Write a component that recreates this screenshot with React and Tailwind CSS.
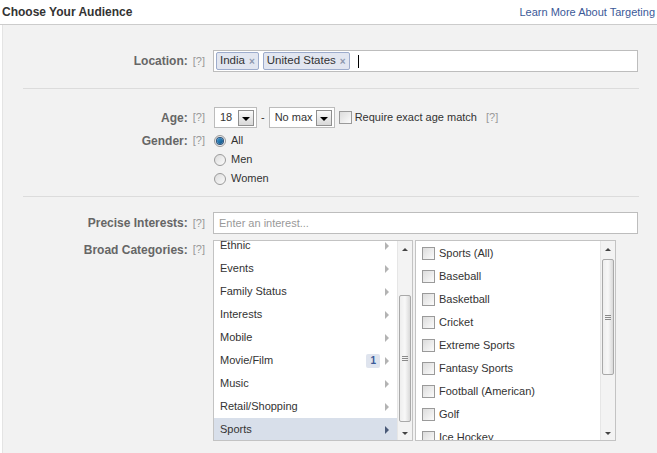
import { useState } from 'react';

const font = { fontFamily: '"Liberation Sans", Arial, sans-serif' };

const categories = [
  { label: 'Ethnic' },
  { label: 'Events' },
  { label: 'Family Status' },
  { label: 'Interests' },
  { label: 'Mobile' },
  { label: 'Movie/Film', count: 1 },
  { label: 'Music' },
  { label: 'Retail/Shopping' },
  { label: 'Sports', active: true },
];

const sports = [
  'Sports (All)',
  'Baseball',
  'Basketball',
  'Cricket',
  'Extreme Sports',
  'Fantasy Sports',
  'Football (American)',
  'Golf',
  'Ice Hockey',
];

function Help({ className = 'ml-[5px]' }) {
  return <span className={`${className} text-[11px] text-[#999]`}>[?]</span>;
}

function Label({ children, className = '' }) {
  return (
    <div className={`w-[203px] flex justify-end items-center shrink-0 pr-[1px] ${className}`}>
      <span className="font-bold text-[#666] text-[12px]">{children}</span>
      <Help />
    </div>
  );
}

function Token({ children }) {
  return (
    <span className="inline-flex items-center h-[18px] px-[3px] mr-[4px] bg-[#e2e6f0] border border-[#9daccc] rounded-[2px] text-[#333] text-[11.5px]">
      {children}
      <span className="ml-[4px] text-[#8d97ad] text-[10px] font-bold">×</span>
    </span>
  );
}

function Select({ value, width }) {
  return (
    <div className={`h-[21px] ${width} bg-white border border-[#bcbcbc] flex items-center justify-between pl-[5px] pr-[2px] text-[11px] text-[#333]`}>
      <span>{value}</span>
      <span className="w-[16px] h-[16px] border border-[#8f8f8f] bg-gradient-to-b from-[#fafafa] to-[#d8d8d8] flex items-center justify-center">
        <span className="mt-[2px] border-x-[4px] border-x-transparent border-t-[4px] border-t-black" />
      </span>
    </div>
  );
}

function Checkbox() {
  return (
    <span className="block w-[13px] h-[13px] shrink-0 border border-[#9a9a9a] bg-gradient-to-br from-[#dcdcdc] to-[#fbfbfb]" />
  );
}

function Radio({ checked }) {
  return (
    <span className="w-[12px] h-[12px] rounded-full border border-[#9a9a9a] bg-gradient-to-br from-[#dcdcdc] to-[#fbfbfb] flex items-center justify-center shrink-0">
      {checked && <span className="w-[6px] h-[6px] rounded-full bg-gradient-to-br from-[#3d9ad6] to-[#0e4f80] ring-1 ring-[#2b4f78]" />}
    </span>
  );
}

function Scrollbar({ offset, thumb }) {
  return (
    <div className="w-[15px] shrink-0 bg-[#f3f3f3] border-l border-[#e6e6e6] flex flex-col">
      <div className="h-[16px] flex items-center justify-center">
        <span className="border-x-[3px] border-x-transparent border-b-[3px] border-b-[#444]" />
      </div>
      <div style={{ height: offset }} />
      <div
        className="mx-[1px] rounded-[2px] border border-[#a9a9a9] bg-gradient-to-r from-[#eeeeee] via-[#f8f8f8] to-[#d9d9d9] flex items-center justify-center"
        style={{ height: thumb }}
      >
        <span className="flex flex-col gap-[1px]">
          <span className="block w-[6px] h-px bg-[#8a8a8a]" />
          <span className="block w-[6px] h-px bg-[#8a8a8a]" />
          <span className="block w-[6px] h-px bg-[#8a8a8a]" />
        </span>
      </div>
      <div className="flex-1" />
      <div className="h-[14px] flex items-center justify-center">
        <span className="border-x-[3px] border-x-transparent border-t-[3px] border-t-[#444]" />
      </div>
    </div>
  );
}

export default function App() {
  const [gender, setGender] = useState('All');

  return (
    <div className="w-[657px] h-[453px] bg-white overflow-hidden text-[#333]" style={font}>
      <div className="h-[25px] flex items-center justify-between pl-[2px] pr-[2px] border-b border-[#cccccc]">
        <span className="font-bold text-[12px] text-[#333]">Choose Your Audience</span>
        <span className="text-[11px] text-[#3b5998]">Learn More About Targeting</span>
      </div>

      <div className="ml-[2px] h-[428px] bg-[#f2f2f2] border-l border-[#e4e4e4] pt-[25px]">
        <div className="flex items-center">
          <Label>Location:</Label>
          <div className="ml-[7px] w-[425px] h-[22px] bg-white border border-[#bdbdbd] flex items-center pl-[2px]">
            <Token>India</Token>
            <Token>United States</Token>
            <span className="ml-[4px] w-px h-[13px] bg-black" />
          </div>
        </div>

        <div className="mt-[16px] ml-[20px] mr-[18px] border-t border-[#dcdcdc]" />

        <div className="mt-[18px] flex items-center">
          <Label>Age:</Label>
          <div className="ml-[8px] flex items-center">
            <Select value="18" width="w-[43px]" />
            <span className="mx-[4px] text-[11px]">-</span>
            <Select value="No max" width="w-[66px]" />
            <span className="ml-[4px] flex"><Checkbox /></span>
            <span className="ml-[3px] text-[11px]">Require exact age match</span>
            <Help className="ml-[9px]" />
          </div>
        </div>

        <div className="mt-[3px] flex items-start">
          <Label className="h-[19px]">Gender:</Label>
          <div className="ml-[8px] flex flex-col">
            {['All', 'Men', 'Women'].map((g) => (
              <label key={g} className="h-[19px] flex items-center cursor-pointer" onClick={() => setGender(g)}>
                <Radio checked={gender === g} />
                <span className="ml-[5px] text-[11px]">{g}</span>
              </label>
            ))}
          </div>
        </div>

        <div className="mt-[8px] ml-[20px] mr-[18px] border-t border-[#dcdcdc]" />

        <div className="mt-[15px] flex items-center">
          <Label>Precise Interests:</Label>
          <div className="ml-[7px] w-[425px] h-[22px] bg-white border border-[#bdbdbd] flex items-center pl-[5px] text-[11px] text-[#999]">
            Enter an interest...
          </div>
        </div>

        <div className="mt-[6px] flex items-start">
          <Label className="h-[19px]">Broad Categories:</Label>
          <div className="ml-[7px] flex gap-[2px]">
            <div className="w-[200px] h-[201px] bg-white border border-[#c3c3c3] flex overflow-hidden">
              <div className="flex-1 overflow-hidden">
                <div className="-mt-[7px]">
                  {categories.map((c) => (
                    <div
                      key={c.label}
                      className={`h-[23px] flex items-center pl-[6px] pr-[8px] text-[11px] ${c.active ? 'bg-[#d8dfea]' : ''}`}
                    >
                      <span className="flex-1">{c.label}</span>
                      {c.count && (
                        <span className="mr-[5px] px-[4px] h-[14px] rounded-[2px] bg-[#dfe4ee] text-[#3b5998] text-[10px] font-bold leading-[14px]">
                          {c.count}
                        </span>
                      )}
                      <span
                        className={`border-y-[4px] border-y-transparent border-l-[4px] ${c.active ? 'border-l-[#4a5a78]' : 'border-l-[#b3b3b3]'}`}
                      />
                    </div>
                  ))}
                </div>
              </div>
              <Scrollbar offset={38} thumb={127} />
            </div>

            <div className="w-[201px] h-[201px] bg-white border border-[#c3c3c3] flex overflow-hidden">
              <div className="flex-1 overflow-hidden pt-[1px]">
                {sports.map((s) => (
                  <div key={s} className="h-[23px] flex items-center pl-[6px] text-[11px]">
                    <Checkbox />
                    <span className="ml-[4px]">{s}</span>
                  </div>
                ))}
              </div>
              <Scrollbar offset={2} thumb={116} />
            </div>
          </div>
        </div>
      </div>
    </div>
  );
}
